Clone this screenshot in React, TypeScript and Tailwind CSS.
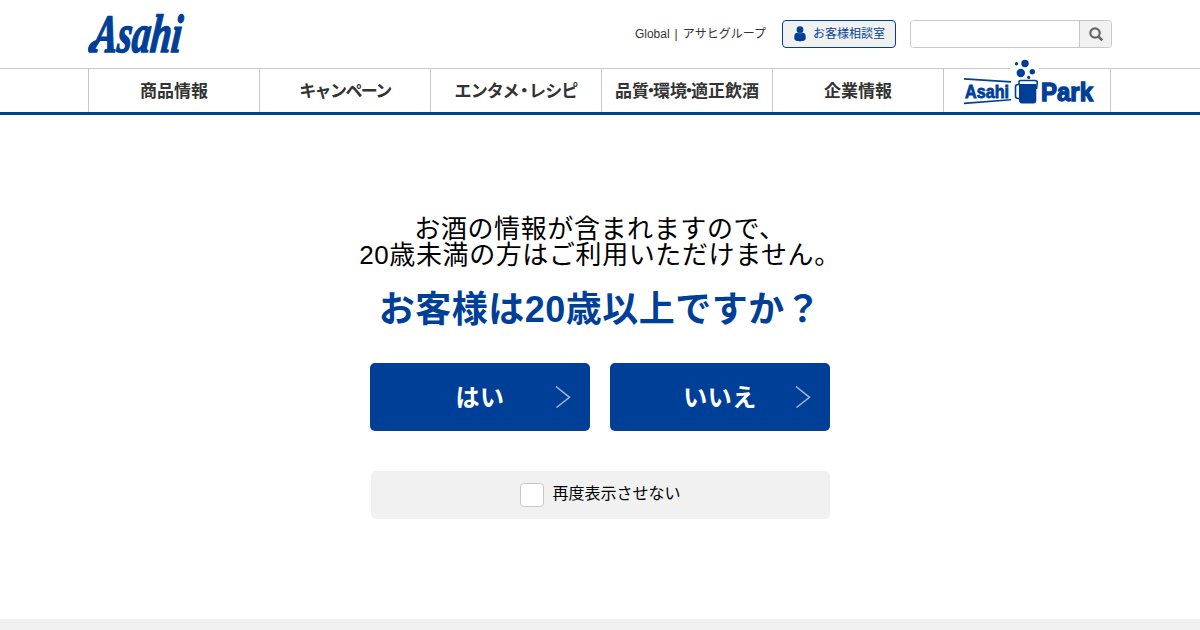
import type { ReactNode } from "react";

function AsahiLogo() {
  return (
    <svg
      width="98"
      height="42"
      viewBox="0 0 98 42"
      role="img"
      aria-label="Asahi"
      className="mt-[13px] overflow-visible"
    >
      <g fill="#003f98">
        <path d="M0 37C0 31 6 26 13 27L8 34Q4 40 1.500 39.500Q0 39 0 37z" />
        <text
          x="5"
          y="39"
          textLength="89"
          lengthAdjust="spacingAndGlyphs"
          transform="translate(2.500 0) skewX(-6)"
          stroke="#003f98"
          strokeWidth="1.500"
          className="font-['Liberation_Serif',serif] text-[54px] font-bold italic"
        >
          Asahi
        </text>
      </g>
    </svg>
  );
}

function ParkLogo() {
  return (
    <svg width="140" height="52" viewBox="960 56 140 52" role="img" aria-label="Asahi Park">
      <path d="M1011 58h28v20h-28z" fill="#fff" />
      <g fill="#003f98">
        <path d="M964 78l47 3v1.700l-47-3zM964 102.500l47-3.600v1.700l-47 3.600z" />
        <text
          x="965"
          y="97.500"
          textLength="44"
          lengthAdjust="spacingAndGlyphs"
          stroke="#003f98"
          strokeWidth="0.800"
          className="font-['Liberation_Sans',sans-serif] text-[17.500px] font-bold"
        >
          Asahi
        </text>
        <text
          x="1041"
          y="100.500"
          textLength="52"
          lengthAdjust="spacingAndGlyphs"
          stroke="#003f98"
          strokeWidth="1.400"
          className="font-['Liberation_Sans',sans-serif] text-[26px] font-bold"
        >
          Park
        </text>
        <circle cx="1016.500" cy="63.800" r="1.700" />
        <circle cx="1025" cy="63.500" r="3.700" />
        <circle cx="1020.800" cy="73" r="4.200" />
        <circle cx="1032.300" cy="71.800" r="2.700" />
        <circle cx="1028.700" cy="77.400" r="1.600" />
        <path d="M1019 84h17.300v16.500q0 3-3 3h-11.300q-3 0-3-3z" />
      </g>
      <g fill="none" stroke="#003f98" strokeWidth="1.600">
        <path d="M1019 84.500h-1q-2.500 0-2.500 2.500v9q0 2.500 2.500 2.500h1" />
        <path d="M1019 84v-2q0-1.500 1.500-1.500h14.500q2.500 0 2.300 2.500l-.8 6" />
      </g>
    </svg>
  );
}

function NavItem({ children }: { children: ReactNode }) {
  return (
    <li className="flex w-[171px] items-center justify-center border-l border-[#c8c8c8] pb-0.5 font-['Noto_Sans_CJK_JP',sans-serif] text-[17px] leading-6 font-bold whitespace-nowrap text-[#333]">
      {children}
    </li>
  );
}

function AnswerButton({ children }: { children: ReactNode }) {
  return (
    <button className="relative h-[68px] w-[220px] rounded-[5px] bg-[#003f98] pt-0.5 text-2xl font-bold tracking-[0.5px] text-white">
      {children}
      <svg
        width="16"
        height="24"
        viewBox="0 0 16 24"
        fill="none"
        stroke="#a3b9dc"
        strokeWidth="1.500"
        className="absolute top-[22px] right-[19px]"
      >
        <path d="M1 1.500l13.500 10.800L1.500 22.500" />
      </svg>
    </button>
  );
}

export default function App() {
  return (
    <div className="flex h-[630px] flex-col overflow-hidden bg-white font-['Liberation_Sans','Noto_Sans_CJK_JP',sans-serif] text-black">
      <header>
        <div className="mx-auto flex h-[68px] w-[1024px] items-start justify-between">
          <AsahiLogo />
          <div className="flex items-center pt-5">
            <div className="flex text-xs text-[#333]">
              <a href="#">Global</a>
              <span className="mx-[5px]">|</span>
              <a href="#">アサヒグループ</a>
            </div>
            <a
              href="#"
              className="ml-4 flex h-7 w-[114px] items-center rounded border border-[#003f98] bg-[#f1f1f1] pl-[11px] text-xs text-[#003f98]"
            >
              <svg width="12" height="16" viewBox="0 0 12 16" fill="currentColor" className="mr-[7px]">
                <circle cx="6" cy="3.700" r="3.400" />
                <path d="M.3 10.500q0-3.800 3.200-3.800 2.500 1.300 5 0 3.200 0 3.200 3.800v2.300q-.5 2.500-5.700 2.500T.3 12.800z" />
              </svg>
              お客様相談室
            </a>
            <div className="ml-[14px] flex h-7 w-[202px] overflow-hidden rounded border border-[#c8c8c8]">
              <input aria-label="検索" className="min-w-0 flex-1 bg-white" />
              <button className="flex w-8 items-center justify-center border-l border-[#c8c8c8] bg-[#f1f1f1]">
                <svg width="14" height="14" viewBox="0 0 14 14" fill="none" stroke="#666">
                  <circle cx="6" cy="6" r="4.700" strokeWidth="2.200" />
                  <path d="M9.300 9.500l4 3.800" strokeWidth="2.600" />
                </svg>
              </button>
            </div>
          </div>
        </div>
        <nav className="h-[47px] border-t border-b-[3px] border-t-[#c8c8c8] border-b-[#003f98]">
          <ul className="mx-auto flex h-full w-[1024px]">
            <NavItem>商品情報</NavItem>
            <NavItem>
              <span className="tracking-[-1.600px]">キャンペーン</span>
            </NavItem>
            <NavItem>
              <span className="tracking-[-0.800px]">
                エンタメ<span className="mx-[-3px]">・</span>レシピ
              </span>
            </NavItem>
            <NavItem>
              品質<span className="mx-[-6.500px]">・</span>環境<span className="mx-[-6.500px]">・</span>適正飲酒
            </NavItem>
            <NavItem>企業情報</NavItem>
            <li className="w-[168px] border-x border-[#c8c8c8] pl-4">
              <div className="-mt-[13px]">
                <ParkLogo />
              </div>
            </li>
          </ul>
        </nav>
      </header>

      <main className="flex flex-1 flex-col items-center pt-[101px]">
        <p className="text-center text-[26px] leading-[26px] tracking-[0.600px] whitespace-nowrap">
          お酒の情報が含まれますので、
          <br />
          20歳未満の方はご利用いただけません。
        </p>
        <h1 className="mt-6 text-4xl leading-9 font-bold tracking-[0.500px] text-[#003f98]">
          お客様は20歳以上ですか？
        </h1>
        <div className="mt-[35px] flex gap-5">
          <AnswerButton>はい</AnswerButton>
          <AnswerButton>いいえ</AnswerButton>
        </div>
        <label className="mt-10 ml-px flex h-12 w-[459px] items-center justify-center gap-2 rounded-[5px] bg-[#f1f1f1]">
          <input type="checkbox" className="size-6 appearance-none rounded border border-[#c8c8c8] bg-white" />
          <span className="pb-0.5 text-base">再度表示させない</span>
        </label>
      </main>
      <footer className="h-[11px] bg-[#f1f1f1]" />
    </div>
  );
}
